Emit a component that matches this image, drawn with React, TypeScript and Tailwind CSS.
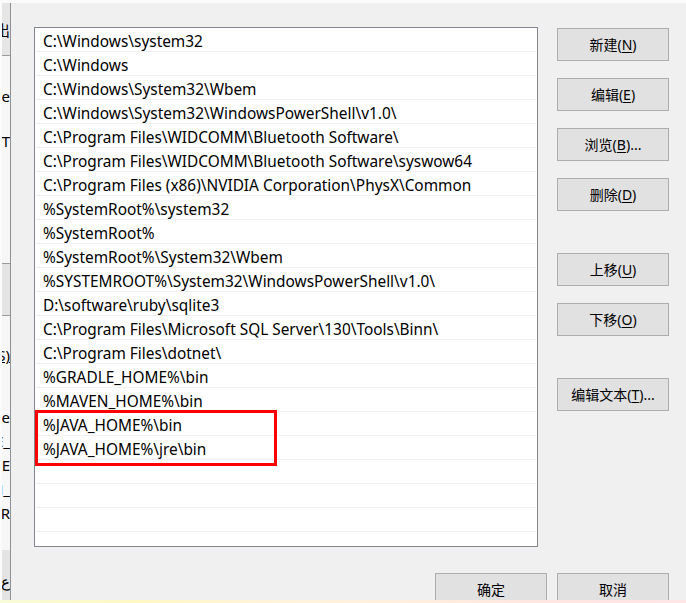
import React from "react";

const paths = [
  "C:\\Windows\\system32",
  "C:\\Windows",
  "C:\\Windows\\System32\\Wbem",
  "C:\\Windows\\System32\\WindowsPowerShell\\v1.0\\",
  "C:\\Program Files\\WIDCOMM\\Bluetooth Software\\",
  "C:\\Program Files\\WIDCOMM\\Bluetooth Software\\syswow64",
  "C:\\Program Files (x86)\\NVIDIA Corporation\\PhysX\\Common",
  "%SystemRoot%\\system32",
  "%SystemRoot%",
  "%SystemRoot%\\System32\\Wbem",
  "%SYSTEMROOT%\\System32\\WindowsPowerShell\\v1.0\\",
  "D:\\software\\ruby\\sqlite3",
  "C:\\Program Files\\Microsoft SQL Server\\130\\Tools\\Binn\\",
  "C:\\Program Files\\dotnet\\",
  "%GRADLE_HOME%\\bin",
  "%MAVEN_HOME%\\bin",
];

const highlighted = ["%JAVA_HOME%\\bin", "%JAVA_HOME%\\jre\\bin"];

function Btn({
  label,
  keyChar,
  suffix = "",
  className = "",
}: {
  label: string;
  keyChar?: string;
  suffix?: string;
  className?: string;
}) {
  return (
    <div
      className={
        "w-[112px] h-[33px] shrink-0 border border-[#adadad] bg-[#e1e1e1] flex items-center justify-center text-[14px] text-black leading-none " +
        className
      }
    >
      <span>
        {label}
        {keyChar !== undefined && (
          <>
            (<span className="underline underline-offset-2">{keyChar}</span>)
          </>
        )}
        {suffix}
      </span>
    </div>
  );
}

function Row({ text }: { text: string }) {
  return (
    <div className="h-[24px] shrink-0 border-b border-[#f0f0f0] flex items-center pl-[7px] pt-[4px] mx-[1px] whitespace-nowrap text-[15.4px] text-black">
      {text}
    </div>
  );
}

function Frag({ text, className = "" }: { text: string; className?: string }) {
  return (
    <div className={"flex justify-end whitespace-nowrap text-[15px] text-black leading-none " + className}>
      <span>{text}</span>
    </div>
  );
}

export default function App() {
  return (
    <div
      className="w-[686px] h-[603px] overflow-hidden flex flex-col bg-[#f0f0f0]"
      style={{ fontFamily: '"Noto Sans", "Noto Sans CJK SC", sans-serif' }}
    >
      <div className="h-[3px] shrink-0 bg-[#fbfbfb]" />
      <div className="h-[597px] shrink-0 flex overflow-hidden">
        {/* background window strip */}
        <div className="w-[10px] shrink-0 flex flex-col overflow-hidden border-l-[2px] border-[#fbfbfb]">
          <div className="h-[53px] shrink-0 bg-[#e6e6e6] border-b border-[#9a9a9a] flex flex-col">
            <Frag text="输出" className="mt-[20px]" />
          </div>
          <div className="h-[207px] shrink-0 bg-[#f7f7f7] flex flex-col">
            <Frag text="Save" className="mt-[33px]" />
            <Frag text="TEXT" className="mt-[30px]" />
          </div>
          <div className="h-[53px] shrink-0 bg-[#e4e4e4] border-y border-[#9a9a9a]" />
          <div className="h-[234px] shrink-0 bg-[#f7f7f7] flex flex-col">
            <Frag text="(S)" className="mt-[32px] underline" />
            <Frag text="ne" className="mt-[47px]" />
            <Frag text="E_" className="mt-[9px]" />
            <Frag text="HOME" className="mt-[9px]" />
            <Frag text="N_" className="mt-[9px]" />
            <Frag text="ER" className="mt-[9px]" />
          </div>
          <div className="flex-1 bg-[#e4e4e4] flex flex-col">
            <Frag text="ع" className="mt-[24px] text-[11px]" />
          </div>
        </div>
        <div className="w-px shrink-0 bg-[#8f9196]" />

        {/* dialog */}
        <div className="flex-1 flex flex-col pl-[23px] pt-[24px]">
          <div className="flex">
            <div className="w-[504px] h-[520px] shrink-0 border border-[#828790] bg-white flex flex-col">
              {paths.map((p, i) => (
                <Row key={i} text={p} />
              ))}
              <div className="relative flex flex-col">
                {highlighted.map((p, i) => (
                  <Row key={i} text={p} />
                ))}
                <div className="absolute left-0 top-[-2px] w-[242px] h-[56px] border-[3px] border-[#ff0000]" />
              </div>
              <div className="h-[24px] shrink-0 border-b border-[#f0f0f0] mx-[1px]" />
              <div className="h-[24px] shrink-0 border-b border-[#f0f0f0] mx-[1px]" />
              <div className="h-[24px] shrink-0 border-b border-[#f0f0f0] mx-[1px]" />
            </div>
            <div className="flex flex-col ml-[19px] mt-[1px]">
              <Btn label="新建" keyChar="N" />
              <Btn label="编辑" keyChar="E" className="mt-[17px]" />
              <Btn label="浏览" keyChar="B" suffix="..." className="mt-[17px]" />
              <Btn label="删除" keyChar="D" className="mt-[17px]" />
              <Btn label="上移" keyChar="U" className="mt-[42px]" />
              <Btn label="下移" keyChar="O" className="mt-[17px]" />
              <Btn label="编辑文本" keyChar="T" suffix="..." className="mt-[42px]" />
            </div>
          </div>
          <div className="flex justify-end gap-[10px] mt-[26px] pr-[17px]">
            <Btn label="确定" />
            <Btn label="取消" />
          </div>
        </div>
      </div>
      <div
        className="h-[3px] shrink-0"
        style={{
          background:
            "linear-gradient(90deg, #f8fcd8 0%, #fff8c4 20%, #fff4dc 40%, #ffeedd 60%, #ffe6e2 80%, #ffe6e6 100%)",
        }}
      />
    </div>
  );
}
